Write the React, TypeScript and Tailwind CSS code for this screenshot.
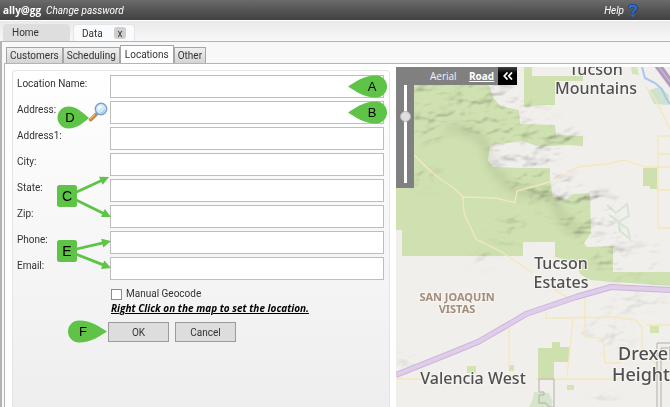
import React, { useState } from "react";

type Field = {
  id: string;
  label: string;
};

const fields: Field[] = [
  { id: "locationName", label: "Location Name:" },
  { id: "address", label: "Address:" },
  { id: "address1", label: "Address1:" },
  { id: "city", label: "City:" },
  { id: "state", label: "State:" },
  { id: "zip", label: "Zip:" },
  { id: "phone", label: "Phone:" },
  { id: "email", label: "Email:" },
];

const sections = ["Customers", "Scheduling", "Locations", "Other"];

type PinProps = {
  letter: string;
  className: string;
  pointLeft?: boolean;
  short?: boolean;
};

const Pin = ({ letter, className, pointLeft = false, short = false }: PinProps) => {
  const width = short ? 32 : 40;
  const rightShape = short
    ? "M32 12C26 7 20 0.5 11.5 0.5A11 11 0 0 0 11.5 22.5C20 22.5 26 17 32 12Z"
    : "M40 11.5C33 7 24 0.5 12 0.5A11 11 0 0 0 12 22.5C24 22.5 33 16 40 11.5Z";
  const leftShape =
    "M0 11.5C7 7 16 0.5 28 0.5A11 11 0 0 1 28 22.5C16 22.5 7 16 0 11.5Z";

  return (
    <svg
      viewBox={`0 0 ${width} 23`}
      width={width}
      height="23"
      className={`pointer-events-none absolute ${className}`}
    >
      <path d={pointLeft ? leftShape : rightShape} fill="#5ec346" />
      <text
        x={pointLeft ? 24 : short ? 13 : 16}
        y="16"
        fontSize="13"
        textAnchor="middle"
        fontFamily="Liberation Sans, sans-serif"
      >
        {letter}
      </text>
    </svg>
  );
};

type ForkProps = {
  letter: string;
  className: string;
  ends: [number, number][];
};

const Fork = ({ letter, className, ends }: ForkProps) => (
  <svg
    viewBox="0 0 56 60"
    width="56"
    height="60"
    className={`pointer-events-none absolute ${className}`}
  >
    {ends.map(([x, y]) => {
      const angle = (Math.atan2(y - 30, x - 12) * 180) / Math.PI;
      const length = Math.hypot(x - 12, y - 30);
      return (
        <g key={y} transform={`translate(12 30) rotate(${angle})`} fill="#5ec346">
          <rect x="0" y="-1.4" width={length - 7} height="2.8" />
          <path d={`M${length} 0l-9 -4.5v9z`} />
        </g>
      );
    })}
    <rect x="1" y="19" width="20" height="22" rx="2.5" fill="#5ec346" />
    <text
      x="11"
      y="35"
      fontSize="14"
      textAnchor="middle"
      fontFamily="Liberation Sans, sans-serif"
    >
      {letter}
    </text>
  </svg>
);

const SearchIcon = () => (
  <svg viewBox="0 0 20 20" className="h-5 w-5">
    <path d="M2.6 17.6L8 12.4" stroke="#c9803a" strokeWidth="3.6" strokeLinecap="round" />
    <path d="M2.4 16.8L7.4 12" stroke="#f3b878" strokeWidth="1.2" strokeLinecap="round" />
    <path d="M7.4 13L9 11.4" stroke="#8b95a8" strokeWidth="2.4" />
    <circle cx="13" cy="7" r="5.7" fill="#cfe9fa" stroke="#7f9fc6" strokeWidth="1.4" />
    <path d="M9.4 7.2A3.8 3.8 0 0 1 14 3.4C14 6 12 7.4 9.4 7.2Z" fill="#f4fbff" />
    <path d="M16.6 7.4A3.8 3.8 0 0 1 12 10.8" stroke="#9ed2f2" strokeWidth="1.3" fill="none" />
  </svg>
);

const PARK =
  "M0 0H92L93 18L97 30L104 39L123 43L124 57L159 58L160 68L187 69V79L171 78L156 79L141 79L126 74L111 76L94 78L92 93L97 100L127 101H154V113L157 130L170 132L178 127L194 126L195 166L188 176L191 180L217 179V205H274V219L247 217L217 215L194 213L184 207L181 196L159 190V175H127V189H6V163H0Z";

const HIGHWAY = "M0 308L50 288L82 275L120 253L130 247L180 230L215 220L274 223";

const CityMap = () => (
  <svg
    viewBox="0 0 274 340"
    preserveAspectRatio="xMinYMin slice"
    className="absolute inset-0 h-full w-full"
    role="img"
    aria-label="Map"
    fontFamily="Noto Sans, Open Sans, sans-serif"
  >
    <defs>
      <filter id="relief" x="0" y="0" width="100%" height="100%">
        <feTurbulence type="fractalNoise" baseFrequency="0.035 0.055" numOctaves="3" seed="14" />
        <feColorMatrix values="0 0 0 0 0  0 0 0 0 0  0 0 0 0 0  1 0 0 0 0" />
        <feDiffuseLighting surfaceScale="10" diffuseConstant="1.3" lightingColor="#fff">
          <feDistantLight azimuth="235" elevation="52" />
        </feDiffuseLighting>
      </filter>
      <filter id="soft" x="-20%" y="-20%" width="140%" height="140%">
        <feGaussianBlur stdDeviation="5" />
      </filter>
      <mask id="hills">
        <g fill="#fff" filter="url(#soft)">
          <path d="M18 5L92 5L135 35L185 70L175 82L150 90L190 120L215 125L222 165L235 205L212 212L190 180L155 150L118 125L100 100L88 72L60 60L30 75L18 70Z" />
          <ellipse cx="112" cy="163" rx="20" ry="12" />
          <ellipse cx="30" cy="112" rx="18" ry="10" opacity="0.6" />
          <ellipse cx="88" cy="194" rx="14" ry="8" opacity="0.5" />
          <ellipse cx="235" cy="232" rx="38" ry="15" opacity="0.5" />
          <ellipse cx="212" cy="268" rx="26" ry="16" opacity="0.5" />
          <ellipse cx="240" cy="190" rx="24" ry="20" opacity="0.4" />
          <ellipse cx="8" cy="292" rx="12" ry="10" opacity="0.6" />
          <ellipse cx="205" cy="330" rx="16" ry="10" opacity="0.4" />
        </g>
      </mask>
    </defs>

    <rect width="274" height="340" fill="#f1efec" />
    <path d={PARK} fill="#cfe1b0" />
    <path d="M128 0H136V9H187V14H159V38L147 38L128 40Z" fill="#cfe1b0" />
    <path d="M235 0H241L243 8L236 7Z" fill="#d4e5b6" />
    <path d="M247 101H261V122H254V119H247Z" fill="#cde0ae" />
    <path d="M142 281H156V275H164V280H173V295H158V312H142Z" fill="#cde0ae" />
    <path d="M254 259H263V266H254ZM71 299H80V306H71ZM113 298H118V304H113ZM171 318H178V323H171Z" fill="#d3e3b2" />
    <path d="M252 24L263 20L273 28V38L258 37Z" fill="#cfe2ce" />
    <path d="M138 325L153 326L157 335L155 340H133L137 332Z" fill="#d5e5cb" />
    <path
      d="M211 138L220 146L231 137L233 149L222 155L232 162L234 172L224 164L222 154L213 148"
      fill="none"
      stroke="#d6e5d3"
      strokeWidth="2"
    />

    <path
      d="M50 60C70 62 84 66 90 80S92 96 99 104S112 117 118 122S150 127 157 130L165 150L184 164"
      fill="none"
      stroke="#6f8055"
      strokeWidth="7"
      opacity="0.22"
      filter="url(#soft)"
    />
    <g mask="url(#hills)" className="mix-blend-multiply">
      <rect width="274" height="340" filter="url(#relief)" opacity="0.28" />
    </g>

    <g fill="none" stroke="#f5e7bb" strokeWidth="1.3">
      <path d="M18 88C32 102 42 112 58 121L67 130L100 131L119 136L121 124L154 115L182 100L211 97L228 93L250 100H274" />
      <path d="M67 130L68 146L80 172L104 184L137 206M152 218L172 231" />
      <path d="M250 20L258 30L267 48L274 62M274 69H262V161H274M262 87H274M262 123H274" />
      <path d="M150 245V251H170L216 250L240 253L246 260V287L262 298M177 252L171 310M189 225V270L207 271L209 296H225" />
      <path d="M0 312H31M113 260V300M139 312H225M250 258H274" />
    </g>

    <path d="M246 0L249 11L259 16L266 22L270 31L274 37" fill="none" stroke="#a8c6f0" strokeWidth="2" />
    <path d="M260 -4L280 23" stroke="#b39cc0" strokeWidth="7" />
    <path d="M260 -4L280 23" stroke="#d1c3da" strokeWidth="1" />
    <path d={HIGHWAY} fill="none" stroke="#cbb6db" strokeWidth="6" strokeLinejoin="round" />
    <path d={HIGHWAY} fill="none" stroke="#dfcdea" strokeWidth="4" strokeLinejoin="round" />
    <g fill="none" stroke="#b5ada5" strokeWidth="1">
      <path d="M143 312H158V340H153L150 336H143V328H148V325H143Z" />
      <path d="M261 340V276H274M265 340V281H274" />
    </g>

    <g
      fill="#505050"
      stroke="#f6f5f2"
      strokeWidth="2"
      paintOrder="stroke"
      textAnchor="middle"
      fontWeight="500"
    >
      <text x="200" y="8" fontSize="16">Tucson</text>
      <text x="200" y="27" fontSize="16">Mountains</text>
      <text x="165" y="202" fontSize="16">Tucson</text>
      <text x="165" y="221" fontSize="16">Estates</text>
      <text x="77" y="317" fontSize="16">Valencia West</text>
      <text x="222" y="293" fontSize="18" textAnchor="start">Drexel</text>
      <text x="216" y="314" fontSize="18" textAnchor="start">Heights</text>
      <g fill="#a48b7c" fontSize="11" fontWeight="700">
        <text x="61" y="234">SAN JOAQUIN</text>
        <text x="61" y="246">VISTAS</text>
      </g>
    </g>
  </svg>
);

const MapControls = () => {
  const [zoom, setZoom] = useState<number>(30);

  return (
    <div className="absolute left-0 top-0 flex flex-col items-start font-['Open_Sans','Noto_Sans',sans-serif] text-[10px] text-gray-100">
      <div className="flex h-[18px] items-center bg-[#808080] pl-[34px]">
        <button className="w-[39px] text-left">Aerial</button>
        <button className="w-[29px] text-left font-bold text-white underline">Road</button>
        <button
          aria-label="Collapse map controls"
          className="flex h-[18px] w-[19px] items-center justify-center bg-linear-to-b from-[#444] to-black to-50%"
        >
          <svg viewBox="0 0 10 8" className="h-2 w-[10px]" fill="none" stroke="#fff" strokeWidth="1.8">
            <path d="M4.5 0.5L1.3 4L4.5 7.5M9 0.5L5.8 4L9 7.5" />
          </svg>
        </button>
      </div>
      <div className="flex h-[103px] w-[18px] justify-center bg-[#808080]">
        <input
          type="range"
          aria-label="Zoom level"
          value={zoom}
          onChange={(e) => setZoom(Number(e.target.value))}
          className="h-[98px] w-[11px] appearance-none [writing-mode:vertical-lr] [background-image:linear-gradient(to_right,transparent_4px,white_4px,white_7px,transparent_7px)] [&::-webkit-slider-thumb]:h-[11px] [&::-webkit-slider-thumb]:w-[11px] [&::-webkit-slider-thumb]:appearance-none [&::-webkit-slider-thumb]:rounded-full [&::-webkit-slider-thumb]:border [&::-webkit-slider-thumb]:border-[#b5b5b5] [&::-webkit-slider-thumb]:bg-[#dedede]"
        />
      </div>
    </div>
  );
};

const LocationForm = () => {
  const [manual, setManual] = useState<boolean>(false);

  return (
    <form
      onSubmit={(e) => e.preventDefault()}
      className="relative mt-[6px] flex w-[378px] shrink-0 flex-col rounded-t border border-b-0 border-[#e4e4e4] bg-linear-to-b from-white to-[#eeeeee] pl-1 pr-[5px] pt-1"
    >
      <div className="flex flex-col gap-[3px]">
        {fields.map((field) => (
          <div key={field.id} className="flex items-start">
            <label htmlFor={field.id} className="w-[93px] leading-[18px]">
              {field.label}
            </label>
            <input
              id={field.id}
              type="text"
              className="h-[23px] min-w-0 flex-1 border border-[#bdbdbd] bg-white px-1 outline-none"
            />
          </div>
        ))}
      </div>
      <div className="ml-[94px] mt-[6px] flex items-center gap-1">
        <input
          id="manual"
          type="checkbox"
          checked={manual}
          onChange={(e) => setManual(e.target.checked)}
          className="h-[11px] w-[11px] appearance-none border border-[#8c8c8c] bg-white checked:bg-[#5b5b5b]"
        />
        <label htmlFor="manual" className="leading-4">
          Manual Geocode
        </label>
      </div>
      <p className="ml-[94px] font-['Open_Sans','Noto_Sans',sans-serif] text-[10px] font-bold italic leading-3 text-black underline">
        Right Click on the map to set the location.
      </p>
      <div className="ml-[91px] mt-2 flex gap-[6px]">
        <button className="h-5 w-[61px] border border-[#9b9b9b] bg-[#dddddd]">OK</button>
        <button className="h-5 w-[61px] border border-[#9b9b9b] bg-[#dddddd]">Cancel</button>
      </div>

      <button aria-label="Find address" className="absolute left-[75px] top-[31px]">
        <SearchIcon />
      </button>
      <Pin letter="A" pointLeft className="left-[335px] top-1" />
      <Pin letter="B" pointLeft className="left-[335px] top-[30px]" />
      <Pin letter="D" short className="left-11 top-[35px]" />
      <Fork letter="C" className="left-[43px] top-[95px]" ends={[[53, 11], [55, 51]]} />
      <Fork letter="E" className="left-[43px] top-[150px]" ends={[[55, 20], [55, 47]]} />
      <Pin letter="F" className="left-[54px] top-[249px]" />
    </form>
  );
};

const App = () => {
  return (
    <div className="flex min-h-screen flex-col bg-[#f8f8f8] font-[Roboto,'Open_Sans',sans-serif] text-[10px] text-[#333]">
      <header className="flex h-[21px] items-center border-b border-white bg-linear-to-b from-[#6b6b6b] to-[#414141] pl-[3px] pr-[32px] text-[10px] text-white">
        <span className="mr-[5px] font-['Open_Sans',sans-serif] font-bold">ally@gg</span>
        <a href="#password" className="italic">
          Change password
        </a>
        <a href="#help" className="ml-auto flex items-center gap-1 italic">
          Help
          <svg viewBox="0 0 10 13" className="h-[13px] w-[10px]" fill="none">
            <path
              d="M1.5 4.2C1.5 0.9 8.3 0.7 8.3 4C8.3 6.4 4.9 6.3 4.9 9"
              stroke="#123f8c"
              strokeWidth="3.2"
            />
            <path
              d="M1.6 4C1.6 1 8 0.8 8 3.9C8 6.1 4.8 6.2 4.8 8.8"
              stroke="#3278d6"
              strokeWidth="1.8"
            />
            <circle cx="4.8" cy="11.3" r="1.6" fill="#2766c0" />
          </svg>
        </a>
      </header>

      <nav className="flex h-5 items-end gap-[3px] bg-linear-to-b from-[#e9e9e9] to-[#f8f8f8] pl-[3px]">
        <button className="h-[17px] w-[67px] rounded-t bg-[#dedede] pl-[9px] text-left">Home</button>
        <div className="flex h-[17px] w-[62px] items-center justify-between rounded-t border border-b-0 border-[#e2e5ec] bg-[#fafbfd] pl-2 pr-2">
          <button>Data</button>
          <button
            aria-label="Close Data"
            className="flex h-3 w-3 items-center justify-center rounded-[3px] bg-[#cfcfcf]"
          >
            x
          </button>
        </div>
      </nav>

      <main className="flex flex-1 flex-col border-l-2 border-t border-[#b4b4b4] pl-[2px] pt-[3px]">
        <nav className="flex items-end pl-[2px]">
          {sections.map((name) =>
            name === "Locations" ? (
              <button
                key={name}
                className="h-[18px] border border-b-0 border-[#a5a5a5] bg-white px-1"
              >
                {name}
              </button>
            ) : (
              <button
                key={name}
                className="h-4 border border-b-0 border-[#a5a5a5] bg-linear-to-b from-[#f0f0f0] to-[#d4d4d4] px-[3px]"
              >
                {name}
              </button>
            )
          )}
        </nav>
        <section className="flex flex-1 border-l border-t border-[#b4b4b4] bg-white pl-[7px]">
          <LocationForm />
          <div className="relative ml-[6px] mt-[3px] flex-1 overflow-hidden">
            <CityMap />
            <MapControls />
          </div>
        </section>
      </main>
    </div>
  );
};

export default App;
